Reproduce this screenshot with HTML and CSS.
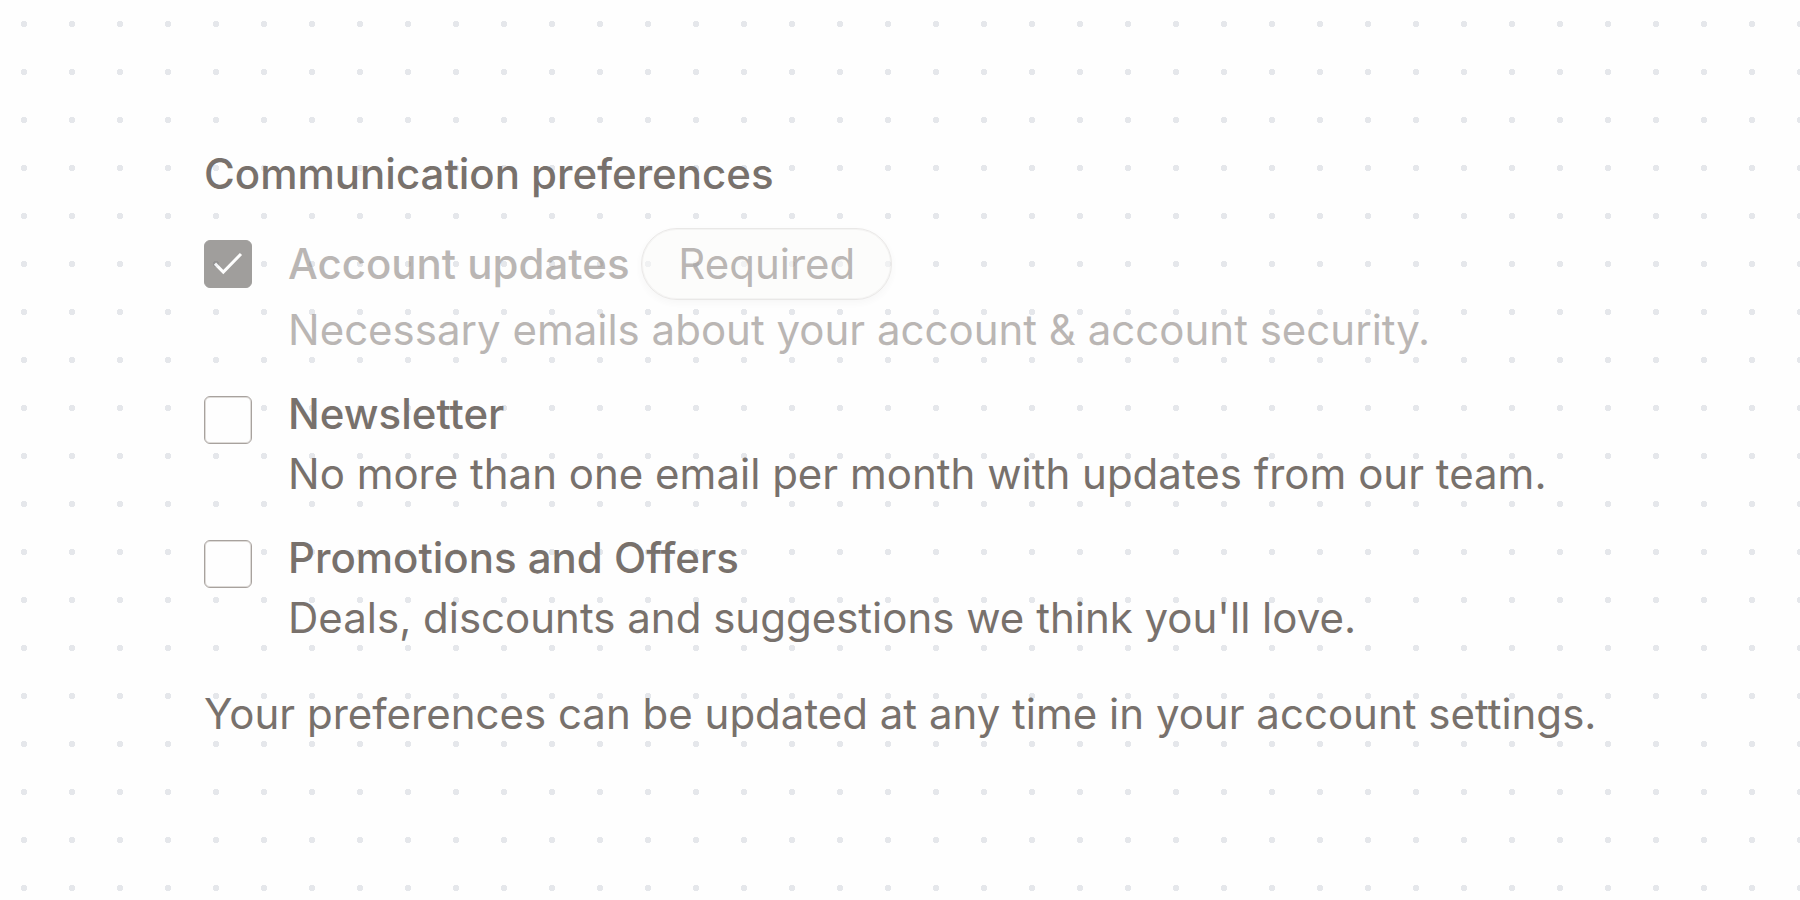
FILE: index.html
```html
<!DOCTYPE html>
<html lang="en">
<head>
<meta charset="utf-8">
<meta name="viewport" content="width=device-width, initial-scale=1">
<title>Communication preferences</title>
<link rel="stylesheet" href="styles.css">
</head>
<body>
<form class="page">
  <fieldset class="group" aria-describedby="footnote">
    <legend class="legend">Communication preferences</legend>
    <div class="options">
      <div class="option option-disabled">
        <span class="control">
          <input class="box" type="checkbox" id="account" aria-describedby="account-text" checked disabled>
          <svg class="tick" viewBox="0 0 48 48" aria-hidden="true"><path d="M11 23.6 19.3 32 37 14"/></svg>
        </span>
        <div class="copy">
          <div class="title"><label class="label" for="account">Account updates</label> <span class="badge">Required</span></div>
          <p class="text" id="account-text">Necessary emails about your account &amp; account security.</p>
        </div>
      </div>
      <div class="option">
        <span class="control">
          <input class="box" type="checkbox" id="newsletter" aria-describedby="newsletter-text">
          <svg class="tick" viewBox="0 0 48 48" aria-hidden="true"><path d="M11 23.6 19.3 32 37 14"/></svg>
        </span>
        <div class="copy">
          <div class="title"><label class="label" for="newsletter">Newsletter</label></div>
          <p class="text" id="newsletter-text">No more than one email per month with updates from our team.</p>
        </div>
      </div>
      <div class="option">
        <span class="control">
          <input class="box" type="checkbox" id="offers" aria-describedby="offers-text">
          <svg class="tick" viewBox="0 0 48 48" aria-hidden="true"><path d="M11 23.6 19.3 32 37 14"/></svg>
        </span>
        <div class="copy">
          <div class="title"><label class="label" for="offers">Promotions and Offers</label></div>
          <p class="text" id="offers-text">Deals, discounts and suggestions we think you'll love.</p>
        </div>
      </div>
    </div>
    <p class="footnote" id="footnote">Your preferences can be updated at any time in your account settings.</p>
  </fieldset>
</form>
</body>
</html>
```

FILE: styles.css
```css
* {
  box-sizing: border-box;
}

body {
  margin: 0;
  color: #78716c;
  background: #fefefe radial-gradient(circle, #e5e7eb 3px, transparent 3px) 0 0 / 48px 48px;
  font-family: Inter, "Liberation Sans", sans-serif;
  font-size: 42px;
  line-height: 60px;
  font-optical-sizing: none;
  -webkit-font-smoothing: antialiased;
}

.page {
  padding: 144px 144px 144px 204px;
}

.group {
  min-width: 0;
  margin: 0;
  padding: 0;
  border: 0;
}

.legend {
  padding: 0;
  font-weight: 500;
}

.options {
  display: flex;
  flex-direction: column;
  gap: 24px;
  margin-top: 24px;
}

.option {
  display: flex;
  gap: 36px;
}

.option-disabled {
  opacity: 0.5;
}

.control {
  display: grid;
  flex: none;
  width: 48px;
  height: 48px;
  margin-top: 12px;
}

.box {
  grid-area: 1 / 1;
  appearance: none;
  width: 48px;
  height: 48px;
  margin: 0;
  border: 1px solid #a8a29e;
  border-radius: 6px;
  background: #fefefe;
  box-shadow: inset 0 0 0 1px #dedbd8;
}

.box:checked {
  border-color: #44403c;
  background: #44403c;
  box-shadow: none;
}

.tick {
  grid-area: 1 / 1;
  width: 48px;
  height: 48px;
  fill: none;
  stroke: #fff;
  stroke-width: 3;
  visibility: hidden;
  pointer-events: none;
}

.box:checked + .tick {
  visibility: visible;
}

.copy {
  min-width: 0;
}

.label {
  font-weight: 500;
}

.badge {
  display: inline-block;
  padding: 5px 36px;
  border: 1px solid #d6d3d1;
  border-radius: 36px;
  background: #fcfcfa;
  box-shadow: inset 0 0 0 1px #ecebe9, 0 3px 6px rgb(0 0 0 / 5%);
}

.text,
.footnote {
  margin: 0;
}

.footnote {
  margin-top: 36px;
}
```
